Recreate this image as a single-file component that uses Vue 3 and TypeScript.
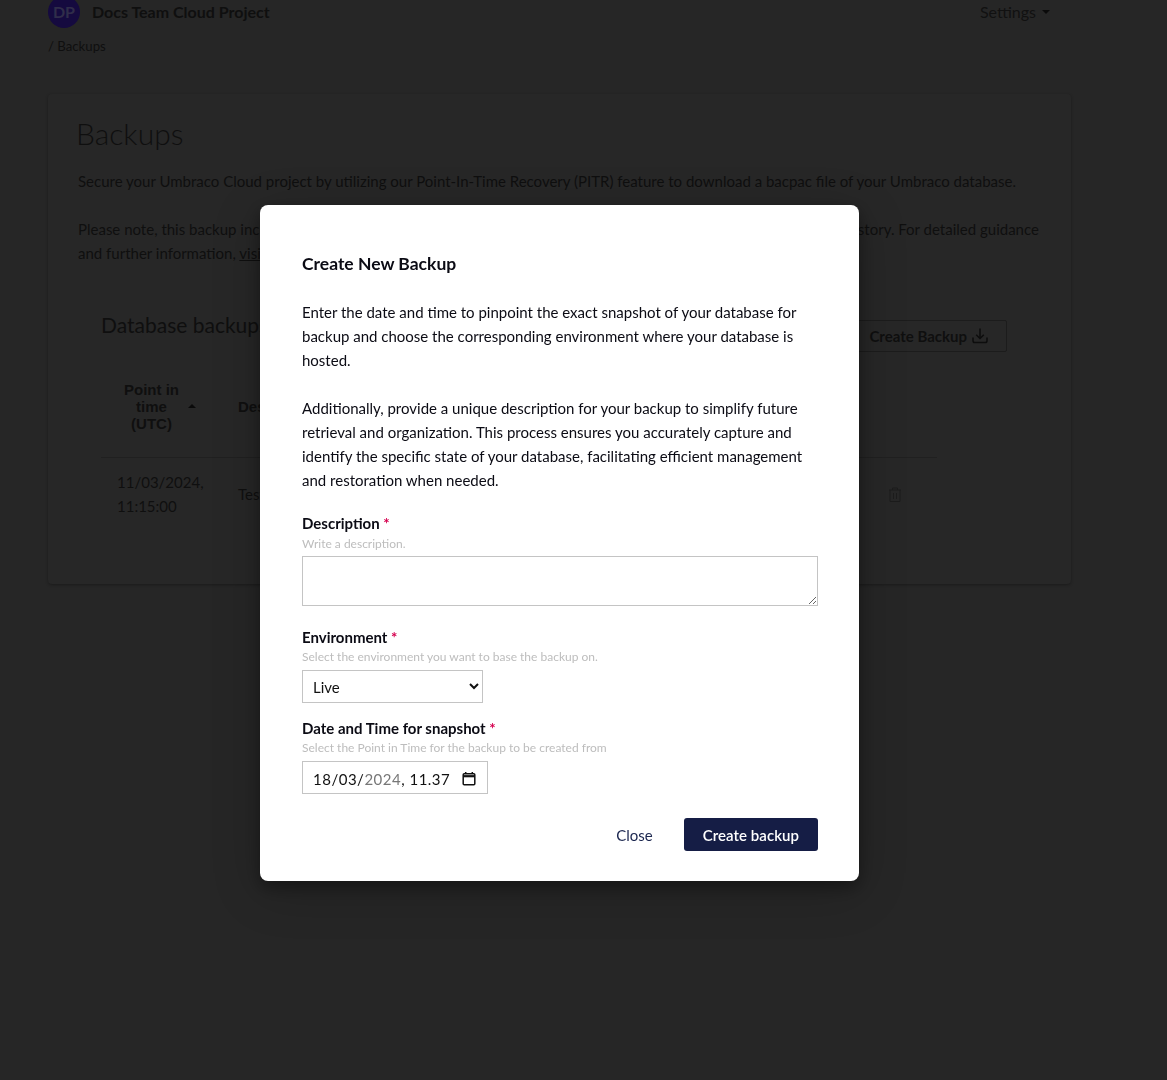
<script setup lang="ts">
import { ref } from "vue";

const description = ref("");
const environment = ref("Live");
const environments = ["Live", "Staging", "Development"];
</script>

<template>
  <div class="page">
    <header class="topbar">
      <div class="project">
        <span class="avatar">DP</span>
        <span class="project-name">Docs Team Cloud Project</span>
      </div>
      <div class="settings">Settings <span class="caret"></span></div>
    </header>
    <div class="crumbs">/ Backups</div>

    <main class="card">
      <h1>Backups</h1>
      <p class="lead">
        Secure your Umbraco Cloud project by utilizing our Point-In-Time Recovery (PITR) feature to download a bacpac file of your Umbraco database.
      </p>
      <p class="lead">
        Please note, this backup includes only the database and does not cover the media files, or code in your Git repository history. For detailed guidance and further information, <a href="#">visit our documentation</a>.
      </p>

      <section class="backups">
        <div class="backups-head">
          <h2>Database backups</h2>
          <button class="outline-btn" type="button">
            Create Backup
            <svg width="18" height="18" viewBox="0 0 18 18" fill="none" stroke="#0d0d0d" stroke-width="1.5">
              <path d="M9 1.5v10M5.2 7.8 9 11.5l3.8-3.7" />
              <path d="M2 10.5v3.2c0 1 .7 1.8 1.8 1.8h10.4c1.1 0 1.8-.8 1.8-1.8v-3.2" />
            </svg>
          </button>
        </div>
        <table>
          <thead>
            <tr>
              <th class="col-time">
                <span class="th-wrap">
                  <span class="th-label">Point in<br />time<br />(UTC)</span>
                  <span class="sort"></span>
                </span>
              </th>
              <th class="col-desc">Description</th>
              <th class="col-action"></th>
            </tr>
          </thead>
          <tbody>
            <tr>
              <td class="col-time">11/03/2024,<br />11:15:00</td>
              <td class="col-desc">Test backup</td>
              <td class="col-action">
                <svg width="14" height="16" viewBox="0 0 14 16" fill="none" stroke="#1c1c1c" stroke-width="1">
                  <path d="M1 3h12M2 3v11.5h10V3M4.5 3V1h5v2M5.5 6v6M8.5 6v6" />
                </svg>
              </td>
            </tr>
          </tbody>
        </table>
      </section>
    </main>

    <div class="backdrop">
      <form class="modal" @submit.prevent>
        <h3>Create New Backup</h3>
        <p>
          Enter the date and time to pinpoint the exact snapshot of your database for backup and choose the corresponding environment where your database is hosted.
        </p>
        <p>
          Additionally, provide a unique description for your backup to simplify future retrieval and organization. This process ensures you accurately capture and identify the specific state of your database, facilitating efficient management and restoration when needed.
        </p>

        <div class="field field-desc">
          <label>Description <em>*</em></label>
          <small>Write a description.</small>
          <textarea v-model="description"></textarea>
        </div>

        <div class="field field-env">
          <label>Environment <em>*</em></label>
          <small>Select the environment you want to base the backup on.</small>
          <select v-model="environment">
            <option v-for="env in environments" :key="env">{{ env }}</option>
          </select>
        </div>

        <div class="field field-date">
          <label>Date and Time for snapshot <em>*</em></label>
          <small>Select the Point in Time for the backup to be created from</small>
          <div class="date-box">
            <span>18/03/<i>2024</i>, 11.37</span>
            <svg width="14" height="14" viewBox="0 0 14 14" fill="none" stroke="#111" stroke-width="1.5">
              <rect x="1.2" y="1.8" width="11.6" height="11" rx="1" />
              <path d="M1.2 4.2h11.6" stroke-width="2.2" />
              <path d="M3.7 0v2M10.3 0v2" />
            </svg>
          </div>
        </div>

        <div class="actions">
          <button class="link-btn" type="button">Close</button>
          <button class="primary-btn" type="submit">Create backup</button>
        </div>
      </form>
    </div>
  </div>
</template>

<style>
html,
body {
  background: #262626;
}
</style>

<style scoped>
.page {
  height: 1080px;
  overflow: hidden;
  box-sizing: border-box;
  padding: 0 96px 0 48px;
  background: #262626;
  color: #0f0f0f;
  font-family: Lato, "Liberation Sans", sans-serif;
  font-size: 15px;
  line-height: 24px;
}

.topbar {
  display: flex;
  justify-content: space-between;
  align-items: center;
  height: 32px;
  margin-top: -4px;
  padding-right: 21px;
}

.project {
  display: flex;
  align-items: center;
  gap: 12px;
}

.avatar {
  display: flex;
  justify-content: center;
  align-items: center;
  width: 32px;
  height: 32px;
  border-radius: 50%;
  background: #150a3f;
  color: #302d4a;
  font-weight: 700;
  font-size: 16px;
}

.project-name {
  font-weight: 700;
  font-size: 16px;
}

.settings {
  display: flex;
  align-items: center;
  gap: 6px;
  color: #111;
  font-size: 16px;
}

.caret {
  width: 0;
  height: 0;
  border-left: 4px solid transparent;
  border-right: 4px solid transparent;
  border-top: 4px solid #0a0a0a;
}

.crumbs {
  margin-top: 8px;
  font-size: 13.2px;
  line-height: 20px;
}

.card {
  height: 490px;
  box-sizing: border-box;
  margin-top: 38px;
  padding: 20px 30px 0 30px;
  background: #272727;
  border-radius: 4px;
  box-shadow: 0 1px 3px rgba(0, 0, 0, 0.3);
}

h1 {
  margin: 0 0 17px -2px;
  font-weight: 300;
  font-size: 30px;
  line-height: 38px;
}

.lead {
  margin: 0 0 24px;
}

.lead a {
  color: inherit;
}

.backups {
  padding: 0 34px 0 23px;
}

.backups-head {
  display: flex;
  justify-content: space-between;
  align-items: flex-start;
  margin-top: 44px;
}

h2 {
  margin: 0;
  font-weight: 400;
  font-size: 21px;
  line-height: 32px;
}

.outline-btn {
  display: flex;
  align-items: center;
  gap: 4px;
  height: 32px;
  margin-top: 11px;
  padding: 0 17px 0 18px;
  background: transparent;
  border: 1px solid #1c1c1c;
  border-radius: 2px;
  color: #0f0f0f;
  font: 700 15px Lato, sans-serif;
}

table {
  width: 836px;
  margin-top: 13px;
  border-collapse: collapse;
  table-layout: fixed;
}

th {
  height: 92px;
  padding: 0 0 8px;
  box-sizing: border-box;
  border-bottom: 1px solid #202020;
  text-align: left;
  font: 700 15px/17px "Liberation Sans", sans-serif;
}

.th-wrap {
  display: flex;
  align-items: center;
  gap: 9px;
  padding-left: 23px;
}

.th-label {
  text-align: center;
}

.sort {
  width: 0;
  height: 0;
  margin-bottom: 2px;
  border-left: 4px solid transparent;
  border-right: 4px solid transparent;
  border-bottom: 4px solid #0a0a0a;
}

td {
  box-sizing: border-box;
  height: 74px;
  padding: 0;
}

.col-time {
  width: 137px;
}

td.col-time {
  padding-left: 16px;
}

.col-action {
  width: 86px;
  text-align: left;
}

td.col-action {
  padding: 6px 0 0 37px;
}

.backdrop {
  position: fixed;
  inset: 0;
  display: flex;
  justify-content: center;
  align-items: flex-start;
  padding: 205px 48px 0 0;
}

.modal {
  width: 599px;
  height: 676px;
  box-sizing: border-box;
  padding: 47px 41px 30px 42px;
  background: #fff;
  border-radius: 8px;
  box-shadow: 0 6px 16px rgba(0, 0, 0, 0.35), 0 10px 50px rgba(0, 0, 0, 0.2);
  color: #0b0b14;
}

h3 {
  margin: 0 0 24px;
  font-weight: 700;
  font-size: 17.5px;
  line-height: 24px;
}

.modal p {
  margin: 0 0 24px;
}

.field {
  display: flex;
  flex-direction: column;
}

.field label {
  font-weight: 700;
  font-size: 15px;
  line-height: 20px;
}

.field em {
  color: #d6004f;
  font-style: normal;
}

.field small {
  margin: 1px 0 4px;
  color: #bdbdbd;
  font-size: 12px;
  line-height: 18px;
}

.field-desc {
  margin-top: -3px;
}

.field-desc small {
  margin: 2px 0 3px;
}

.field-env {
  margin-top: 21px;
}

.field-date {
  margin-top: 15px;
}

textarea {
  box-sizing: border-box;
  width: 516px;
  height: 50px;
  border: 1px solid #c4c4c4;
  outline: 0;
}

select {
  box-sizing: border-box;
  width: 181px;
  height: 33px;
  padding: 0 6px;
  background: #fff;
  border: 1px solid #c4c4c4;
  border-radius: 0;
  color: #111;
  font: 400 15px Lato, sans-serif;
}

.date-box {
  display: flex;
  align-items: center;
  justify-content: space-between;
  box-sizing: border-box;
  width: 186px;
  height: 33px;
  padding: 2px 11px 0 10px;
  border: 1px solid #c4c4c4;
  color: #111;
  font-family: Lato, sans-serif;
  font-size: 15px;
  letter-spacing: 0.5px;
}

.date-box i {
  color: #777;
  font-style: normal;
}

.actions {
  display: flex;
  justify-content: flex-end;
  align-items: center;
  gap: 13px;
  margin-top: 24px;
}

.link-btn,
.primary-btn {
  height: 33px;
  padding: 0 18px;
  border: 0;
  border-radius: 3px;
  font: 400 15px Lato, sans-serif;
}

.link-btn {
  background: transparent;
  color: #1b264f;
}

.primary-btn {
  padding: 0 19px;
  background: #151d45;
  color: #fff;
  font-weight: 600;
  letter-spacing: 0.05px;
}
</style>
